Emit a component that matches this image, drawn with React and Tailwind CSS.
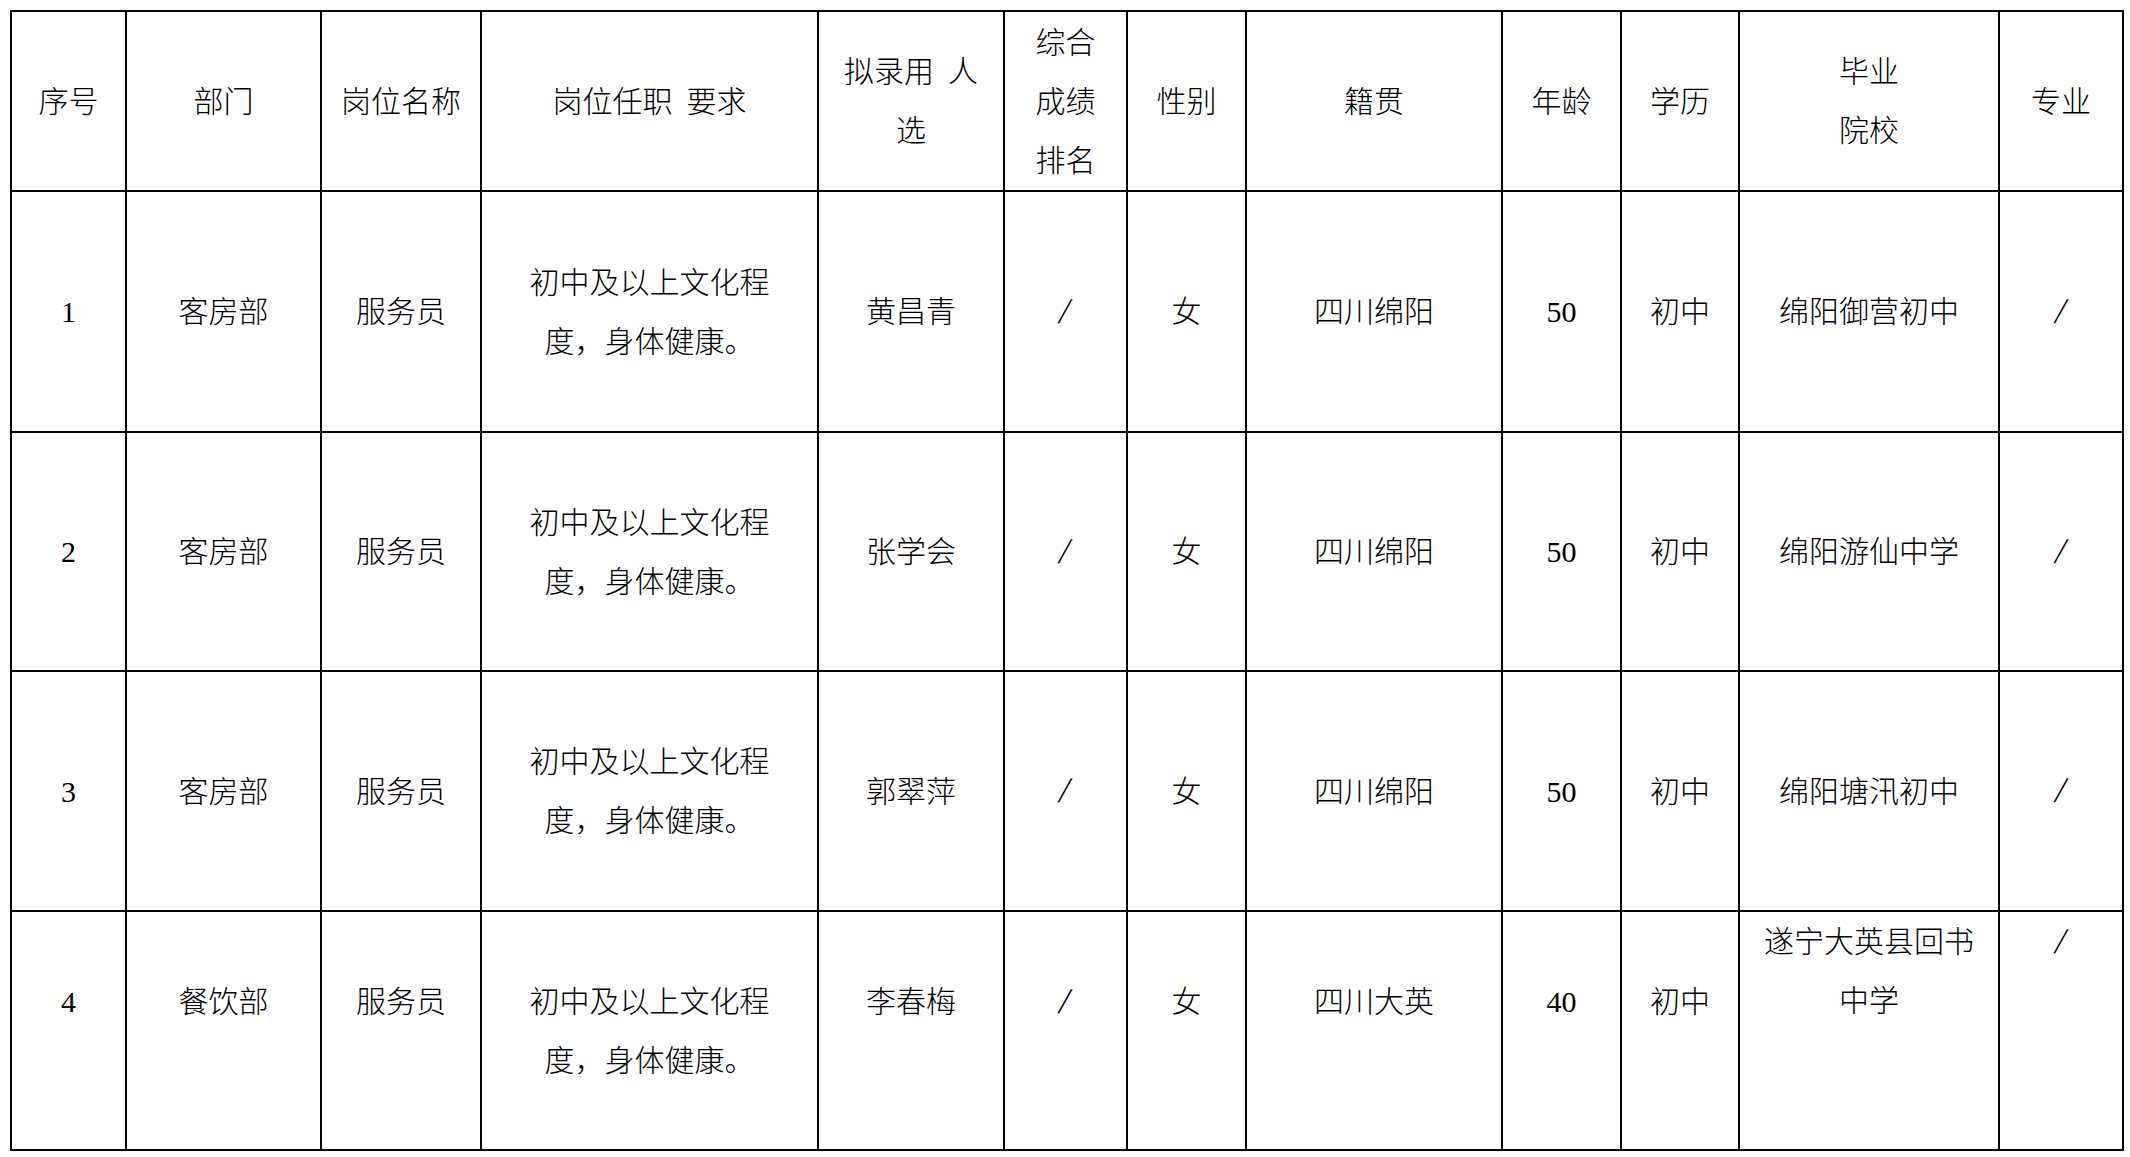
import React from "react";

const FONT = { fontFamily: "'Liberation Serif', 'Noto Sans CJK SC', serif" };

const Slash = () => (
  <span className="inline-block text-[36px] leading-[59px] font-normal" style={{ fontFamily: "'Liberation Serif', serif", transform: "skewX(-12deg)" }}>/</span>
);

const Gap = () => <span className="inline-block w-[14px]" />;

const Cell = ({ children, top = false, pt = "" }) => (
  <div
    className={
      "border-r-2 border-b-2 border-black flex justify-center text-center " +
      (top ? "items-start " + pt : "items-center")
    }
  >
    <div>{children}</div>
  </div>
);

const req = (
  <>
    初中及以上文化程
    <br />
    度，身体健康。
  </>
);

const rows = [
  ["1", "客房部", "服务员", req, "黄昌青", <Slash />, "女", "四川绵阳", "50", "初中", "绵阳御营初中", <Slash />],
  ["2", "客房部", "服务员", req, "张学会", <Slash />, "女", "四川绵阳", "50", "初中", "绵阳游仙中学", <Slash />],
  ["3", "客房部", "服务员", req, "郭翠萍", <Slash />, "女", "四川绵阳", "50", "初中", "绵阳塘汛初中", <Slash />],
];

const last = ["4", "餐饮部", "服务员", req, "李春梅", <Slash />, "女", "四川大英", "40", "初中",
  <>遂宁大英县回书<br />中学</>, <Slash />];

const header = [
  "序号",
  "部门",
  "岗位名称",
  <>岗位任职<Gap />要求</>,
  <>拟录用<Gap />人<br />选</>,
  <>综合<br />成绩<br />排名</>,
  "性别",
  "籍贯",
  "年龄",
  "学历",
  <>毕业<br />院校</>,
  "专业",
];

export default function App() {
  return (
    <div className="min-h-[1157px] w-[2130px] bg-white pt-[10px] pl-[10px]">
      <div
        className="grid w-fit grid-cols-[115px_195px_160px_337px_186px_123px_119px_256px_119px_118px_260px_124px] grid-rows-[180px_241px_239px_240px_239px] border-l-2 border-t-2 border-black text-[30px] font-light leading-[59px] text-black"
        style={FONT}
      >
        {header.map((h, i) => (
          <Cell key={"h" + i}>{h}</Cell>
        ))}
        {rows.map((r, ri) =>
          r.map((c, ci) => <Cell key={ri + "-" + ci}>{c}</Cell>)
        )}
        {last.map((c, ci) => (
          <Cell key={"l" + ci} top pt={ci === 10 || ci === 11 ? "pt-0" : "pt-[60px]"}>
            {c}
          </Cell>
        ))}
      </div>
    </div>
  );
}
